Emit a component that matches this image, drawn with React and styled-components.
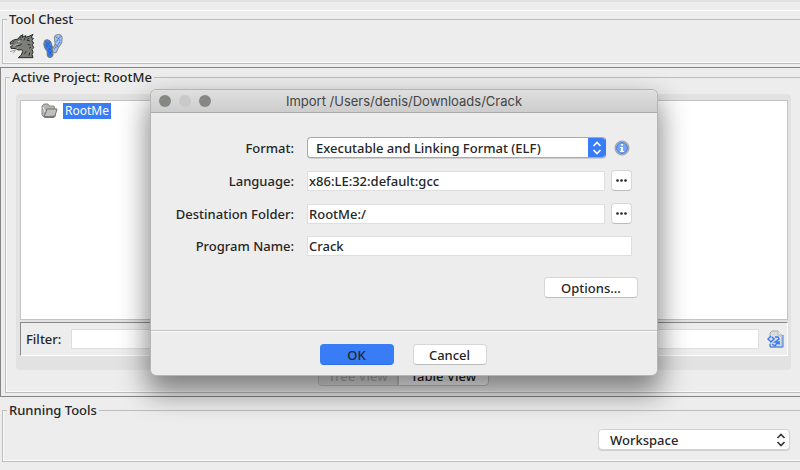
import React from "react";
import styled, { createGlobalStyle } from "styled-components";

const Global = createGlobalStyle`
  *, *::before, *::after { box-sizing: border-box; }
  body { margin: 0; background: #ededed; }
  body, button, input, select {
    font-family: "Noto Sans", "Open Sans", sans-serif;
    font-size: 13px;
    font-weight: 500;
    line-height: 16px;
    color: #262626;
  }
`;

const Page = styled.div`
  position: relative;
  display: flex;
  flex-direction: column;
  min-height: 100vh;
  padding-bottom: 8px;
  overflow: hidden;
`;

const TopStrip = styled.div`
  height: 11px;
  flex: none;
  border-top: 2px solid #e0e0e0;
  border-bottom: 1px solid #fff;
`;

const Group = styled.fieldset`
  margin: 0 0 0 ${(p) => p.$inset}px;
  padding: 0;
  min-width: 0;
  border: 1px solid #bdbdbd;
  border-right: 0;
  box-shadow: inset 1px -1px 0 #fafafa;
  flex: ${(p) => (p.$grow ? "1" : "none")};
  display: flex;
  flex-direction: column;
`;

const Legend = styled.legend`
  margin-left: 4px;
  padding: 0 2px;
  height: 16px;
`;

const Tools = styled.div`
  display: flex;
  align-items: center;
  gap: 8px;
  height: 36px;
  padding: 2px 6px 0;
`;

const ToolButton = styled.button`
  display: flex;
  padding: 0;
  border: 0;
  background: none;
`;

const ProjectFrame = styled.section`
  display: flex;
  flex: 1;
  margin: 3px 0 5px;
  padding: 1px 0 3px;
  border: 1px solid #858585;
  border-right: 0;
`;

const ProjectBody = styled.div`
  flex: 1;
  display: flex;
  flex-direction: column;
  align-items: center;
  padding: 9px 9px 6px 10px;
`;

const TabPane = styled.div`
  width: 100%;
  flex: 1;
  display: flex;
  flex-direction: column;
  padding: 6px 3px 14px 4px;
  border-radius: 4px;
  background: #e2e2e2;
`;

const Tree = styled.ul`
  flex: 1;
  margin: 0;
  padding: 2px 20px;
  list-style: none;
  background: #fff;
  border: 1px solid #c4c4c4;
`;

const TreeItem = styled.li`
  display: flex;
  align-items: center;
  gap: 5px;
`;

const Selected = styled.span`
  padding: 0 2px;
  background: #387df5;
  color: #fff;
  font-size: 12px;
  font-weight: 400;
`;

const FilterBar = styled.div`
  display: flex;
  align-items: center;
  height: 34px;
  margin-top: 2px;
  padding: 0 3px 0 5px;
  background: #ededed;
  border: 1px solid #8a8a8a;
  border-right-color: #fff;
  border-bottom-color: #fff;
`;

const Field = styled.input`
  flex: 1;
  min-width: 0;
  height: 20px;
  padding: 0 1px;
  border: 1px solid #dedede;
  border-radius: 0;
  background: #fff;
  outline: 0;
`;

const FilterField = styled(Field)`
  margin: 0 8px 0 10px;
`;

const Tabs = styled.div`
  display: flex;
  margin-top: -4px;
`;

const Tab = styled.button`
  height: 20px;
  width: ${(p) => (p.$active ? 80 : 91)}px;
  padding: 0;
  border: 1px solid #c8c8c8;
  border-radius: ${(p) => (p.$active ? "4px 0 0 4px" : "0 4px 4px 0")};
  background: ${(p) => (p.$active ? "#e4e4e4" : "#fff")};
  color: ${(p) => (p.$active ? "#b4b4b4" : "#262626")};
`;

const Running = styled.div`
  display: flex;
  justify-content: flex-end;
  padding: 11px 10px;
`;

const Picker = styled.span`
  flex: ${(p) => (p.$wide ? "1" : "none")};
  display: grid;
  grid-template-columns: 1fr 17px;
  width: ${(p) => (p.$wide ? "auto" : "192px")};
  height: 21px;
  overflow: hidden;
  border: 1px solid ${(p) => (p.$accent ? "#a9a9a9" : "#d2d2d2")};
  border-right-color: ${(p) => (p.$accent ? "#387df5" : "#d2d2d2")};
  border-radius: 4px;
  background: #fff;
  box-shadow: 0 1px 0 #d0d0d0;
`;

const Choice = styled.select`
  grid-area: 1 / 1 / 2 / 3;
  appearance: none;
  padding: 0 20px 0 ${(p) => p.$indent}px;
  border: 0;
  background: transparent;
  outline: 0;
`;

const PickerEnd = styled.span`
  grid-area: 1 / 2;
  display: flex;
  align-items: center;
  justify-content: center;
  pointer-events: none;
  background: ${(p) => (p.$accent ? "#387df5" : "transparent")};
  color: ${(p) => (p.$accent ? "#fff" : "#333")};
`;

const Overlay = styled.div`
  position: absolute;
  inset: 0;
  display: flex;
  justify-content: center;
  align-items: flex-start;
  padding: 90px 0 0 8px;
`;

const Dialog = styled.form`
  width: 506px;
  overflow: hidden;
  border-radius: 5px;
  background: #ededed;
  box-shadow: 0 0 0 1px #b5b5b5, 0 14px 28px 4px rgba(0, 0, 0, 0.46);
`;

const TitleBar = styled.header`
  display: grid;
  grid-template-columns: 60px 1fr 60px;
  align-items: center;
  height: 23px;
  padding: 0 8px;
  background: linear-gradient(#dfdfdf, #cdcdcd);
  border-bottom: 1px solid #aaa;
`;

const Lights = styled.div`
  display: flex;
  gap: 8px;
`;

const Light = styled.span`
  width: 12px;
  height: 12px;
  border-radius: 50%;
  background: ${(p) => (p.$dim ? "#c9c9c9" : "#858782")};
`;

const Title = styled.h1`
  margin: 0;
  text-align: center;
  font: 400 13px/16px Inter, sans-serif;
  color: #444;
`;

const Rows = styled.div`
  display: grid;
  grid-template-columns: 143px 1fr;
  column-gap: 13px;
  row-gap: 12px;
  align-items: center;
  padding: 24px 25px 21px 0;
`;

const RowLabel = styled.label`
  text-align: right;
`;

const Control = styled.div`
  display: flex;
  align-items: center;
  gap: 6px;
`;

const PushButton = styled.button`
  display: inline-flex;
  align-items: center;
  justify-content: center;
  height: 21px;
  width: ${(p) => p.$width}px;
  padding: 0;
  border: 1px solid ${(p) => (p.$primary ? "#387df5" : "#d6d6d6")};
  border-bottom-color: ${(p) => (p.$primary ? "#2f6fe0" : "#bcbcbc")};
  border-radius: 4px;
  background: ${(p) => (p.$primary ? "#387df5" : "#fff")};
`;

const InfoButton = styled(ToolButton)`
  margin: 0 2px;
`;

const OptionsRow = styled.div`
  display: flex;
  justify-content: flex-end;
  padding: 0 19px 32px;
`;

const Footer = styled.footer`
  display: flex;
  justify-content: center;
  gap: 19px;
  padding: 13px 2px 10px 0;
  border-top: 1px solid #c6c6c6;
  box-shadow: inset 0 1px 0 #fafafa;
`;

const Chevrons = () => (
  <svg width="10" height="14" viewBox="0 0 10 14" fill="none" stroke="currentColor" strokeWidth="1.6" aria-hidden="true">
    <path d="M1.5 5 5 1.5 8.5 5M1.5 9 5 12.5 8.5 9" />
  </svg>
);

const Dots = () => (
  <svg width="11" height="3" viewBox="0 0 11 3" fill="#222" aria-hidden="true">
    <circle cx="1.5" cy="1.5" r="1.3" />
    <circle cx="5.5" cy="1.5" r="1.3" />
    <circle cx="9.5" cy="1.5" r="1.3" />
  </svg>
);

const DragonIcon = () => (
  <svg width="26" height="26" viewBox="0 0 78 78" aria-hidden="true">
    <path
      d="M4 27 14 21 27 18 33 10 42 5 39 13 51 8 49 13 60 10 72 4 66 14 73 16 69 23 74 30 70 35 74 44 69 49 72 58 69 64 72 74H28L37 66 41 55 38 50 27 51 21 47 6 46 5 40 12 37 4 33Z"
      fill="#7c7e78"
      stroke="#292929"
      strokeWidth="3"
    />
    <path
      d="M5 33H15M12 26H16M29 22 38 20M20 39 33 37 39 32M49 14 45 22M60 15 54 22 63 24M56 34 64 36M66 42 60 46M52 54 46 64M33 11 35 16M62 58 60 68"
      fill="none"
      stroke="#30312e"
      strokeWidth="3"
    />
    <path d="M29 43 20 51 3 56M20 51 12 61" fill="none" stroke="#a0a19d" strokeWidth="3" />
    <path d="M6 35 18 37 28 34" fill="none" stroke="#d8d8d8" strokeWidth="2" />
    <path d="M28 26 34 23" stroke="#eee" strokeWidth="3" />
  </svg>
);

const FeetIcon = () => (
  <svg width="20" height="26" viewBox="2 0 56 74" aria-hidden="true">
    <path
      d="M5 26C7 17 19 17 24 26L29 42 30 62C28 71 18 73 14 64L13 51C6 43 2 34 5 26Z"
      fill="#347cf3"
      stroke="#77796f"
      strokeWidth="3"
    />
    <path
      d="M34 12C38 2 53 1 56 13L55 27 45 42 40 54C34 59 28 54 29 47L36 32Z"
      fill="#a8c4ee"
      stroke="#898b86"
      strokeWidth="3"
    />
    <path d="M9 25 24 40M8 33 27 53M16 51 27 62M22 25 10 38M27 38 16 50M28 50 16 64" stroke="#263d69" strokeWidth="2" strokeDasharray="3 3" />
    <path d="M39 11 52 23M51 10 38 26M50 25 34 46M37 32 44 40" stroke="#3476e9" strokeWidth="3" strokeDasharray="4 2" />
  </svg>
);

const FolderIcon = () => (
  <svg width="17" height="16" viewBox="0 0 17 16" aria-hidden="true">
    <path d="M1 12V3L3 1H7L8 3H13L14 6V14H3Z" fill="#b3b5b0" stroke="#8a8c87" />
    <path d="M3 14 6 6H16L14 13Z" fill="#bfc1bc" stroke="#6f716c" />
    <path d="M2 4 4 9" fill="none" stroke="#eee" />
    <path d="M4 14H13" fill="none" stroke="#777974" strokeWidth="2" />
  </svg>
);

const InfoIcon = () => (
  <svg width="16" height="16" viewBox="0 0 16 16" aria-hidden="true">
    <circle cx="8" cy="8" r="7" fill="#b9bbbd" stroke="#9a9c9d" />
    <circle cx="8" cy="8" r="5.4" fill="#7ba6ee" stroke="#387df5" />
    <path d="M7 4H9V5.5H7ZM6 7H9V11H10V12H6V11H7V8H6Z" fill="#fff" />
  </svg>
);

const FilterIcon = () => (
  <svg width="17" height="18" viewBox="0 0 17 18" aria-hidden="true">
    <path d="M3 6V3L5 1H11L15 5V17H3V13" fill="#dcdcdc" stroke="#a8a8a8" />
    <path d="M11 1V5H15" fill="#f3f3f3" stroke="#b5b5b5" />
    <path d="M16 5V17H3V14" fill="none" stroke="#387df5" />
    <path d="M4 6 1 9 4 12 7 9 5 7M8 7H11L12 9 8 12H13M5 14 8 16 10 13 13 14" fill="none" stroke="#387df5" strokeWidth="1.5" />
  </svg>
);

const SelectBox = ({ id, label, value, wide, accent }) => (
  <Picker $wide={wide} $accent={accent}>
    <Choice id={id} aria-label={label} $indent={accent ? 8 : 11} defaultValue={value}>
      <option>{value}</option>
    </Choice>
    <PickerEnd $accent={accent}>
      <Chevrons />
    </PickerEnd>
  </Picker>
);

const BrowseRow = ({ id, label, value }) => (
  <>
    <RowLabel htmlFor={id}>{label}</RowLabel>
    <Control>
      <Field id={id} defaultValue={value} />
      <PushButton type="button" $width={21} aria-label={`Browse ${label}`}>
        <Dots />
      </PushButton>
    </Control>
  </>
);

export default function App() {
  return (
    <Page>
      <Global />
      <TopStrip />
      <Group $inset={2}>
        <Legend>Tool Chest</Legend>
        <Tools>
          <ToolButton aria-label="Code browser"><DragonIcon /></ToolButton>
          <ToolButton aria-label="Version tracking"><FeetIcon /></ToolButton>
        </Tools>
      </Group>

      <ProjectFrame>
        <Group $inset={4} $grow>
          <Legend>Active Project: RootMe</Legend>
          <ProjectBody>
            <TabPane>
              <Tree>
                <TreeItem>
                  <FolderIcon />
                  <Selected>RootMe</Selected>
                </TreeItem>
              </Tree>
              <FilterBar>
                <label htmlFor="filter">Filter:</label>
                <FilterField id="filter" />
                <ToolButton aria-label="Filter options"><FilterIcon /></ToolButton>
              </FilterBar>
            </TabPane>
            <Tabs>
              <Tab $active>Tree View</Tab>
              <Tab>Table View</Tab>
            </Tabs>
          </ProjectBody>
        </Group>
      </ProjectFrame>

      <Group $inset={2}>
        <Legend>Running Tools</Legend>
        <Running>
          <SelectBox label="Workspace" value="Workspace" />
        </Running>
      </Group>

      <Overlay>
        <Dialog role="dialog" aria-labelledby="import-title" onSubmit={(e) => e.preventDefault()}>
          <TitleBar>
            <Lights>
              <Light />
              <Light $dim />
              <Light />
            </Lights>
            <Title id="import-title">Import /Users/denis/Downloads/Crack</Title>
          </TitleBar>
          <Rows>
            <RowLabel htmlFor="format">Format:</RowLabel>
            <Control>
              <SelectBox id="format" value="Executable and Linking Format (ELF)" wide accent />
              <InfoButton type="button" aria-label="Format information"><InfoIcon /></InfoButton>
            </Control>
            <BrowseRow id="language" label="Language:" value="x86:LE:32:default:gcc" />
            <BrowseRow id="folder" label="Destination Folder:" value="RootMe:/" />
            <RowLabel htmlFor="program">Program Name:</RowLabel>
            <Control>
              <Field id="program" defaultValue="Crack" />
            </Control>
          </Rows>
          <OptionsRow>
            <PushButton type="button" $width={94}>Options...</PushButton>
          </OptionsRow>
          <Footer>
            <PushButton type="submit" $width={74} $primary>OK</PushButton>
            <PushButton type="button" $width={74}>Cancel</PushButton>
          </Footer>
        </Dialog>
      </Overlay>
    </Page>
  );
}
